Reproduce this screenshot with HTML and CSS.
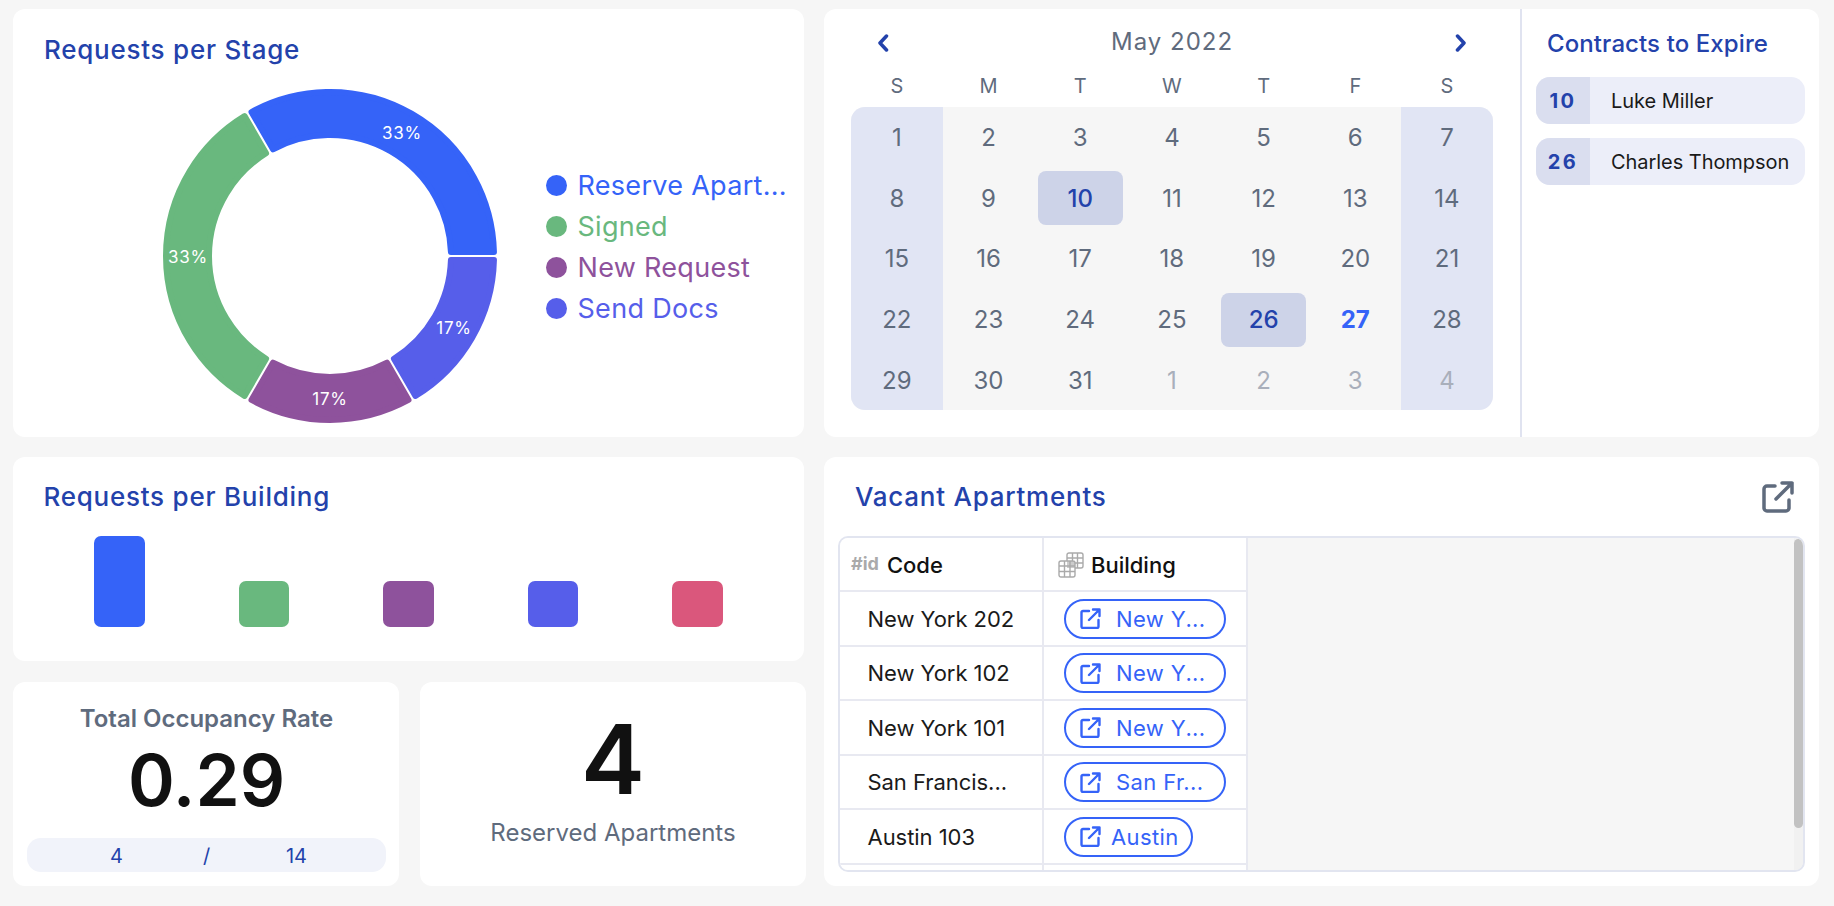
FILE: index.html
```html
<!DOCTYPE html>
<html lang="en">
<head>
<meta charset="utf-8">
<title>Dashboard</title>
<link rel="stylesheet" href="styles.css">
</head>
<body>
<main class="dash">
  <section class="card stage">
    <h2 class="title">Requests per Stage</h2>
    <div class="stage-body">
      <div class="donut">
        <svg class="donut-svg" viewBox="-168 -168 336 336" width="336" height="336">
          <path class="seg blue" d="M163.95 -4A164 164 0 0 0 -78.51 -143.99L-57.01 -106.72A121 121 0 0 1 120.93 -4Z"/>
          <path class="seg green" d="M-85.46 -139.97A164 164 0 0 0 -85.46 139.97L-63.94 102.73A121 121 0 0 1 -63.94 -102.73Z"/>
          <path class="seg purple" d="M-78.51 143.99A164 164 0 0 0 78.51 143.99L57.01 106.72A121 121 0 0 1 -57.01 106.72Z"/>
          <path class="seg peri" d="M85.46 139.97A164 164 0 0 0 163.95 4L120.93 4A121 121 0 0 1 63.94 102.73Z"/>
          <text class="pct" x="72" y="-123">33%</text>
          <text class="pct" x="-142" y="0.5">33%</text>
          <text class="pct" x="124" y="71.5">17%</text>
          <text class="pct" x="0" y="142.5">17%</text>
        </svg>
      </div>
      <ul class="legend">
        <li class="legend-item c-blue"><span class="dot"></span>Reserve Apart...</li>
        <li class="legend-item c-green"><span class="dot"></span>Signed</li>
        <li class="legend-item c-purple"><span class="dot"></span>New Request</li>
        <li class="legend-item c-peri"><span class="dot"></span>Send Docs</li>
      </ul>
    </div>
  </section>

  <section class="card cal-card">
    <div class="calendar">
      <div class="cal-head">
        <svg class="chev" viewBox="0 0 12 18" width="12" height="18"><path d="M9.500 2 3 9l6.500 7"/></svg>
        <span class="cal-month">May 2022</span>
        <svg class="chev" viewBox="0 0 12 18" width="12" height="18"><path d="M2.500 2 9 9l-6.500 7"/></svg>
      </div>
      <div class="cal-week">
        <span>S</span><span>M</span><span>T</span><span>W</span><span>T</span><span>F</span><span>S</span>
      </div>
      <div class="cal-grid">
        <span class="day we">1</span><span class="day">2</span><span class="day">3</span><span class="day">4</span><span class="day">5</span><span class="day">6</span><span class="day we">7</span>
        <span class="day we">8</span><span class="day">9</span><span class="day"><b class="mark">10</b></span><span class="day">11</span><span class="day">12</span><span class="day">13</span><span class="day we">14</span>
        <span class="day we">15</span><span class="day">16</span><span class="day">17</span><span class="day">18</span><span class="day">19</span><span class="day">20</span><span class="day we">21</span>
        <span class="day we">22</span><span class="day">23</span><span class="day">24</span><span class="day">25</span><span class="day"><b class="mark">26</b></span><span class="day today">27</span><span class="day we">28</span>
        <span class="day we">29</span><span class="day">30</span><span class="day">31</span><span class="day off">1</span><span class="day off">2</span><span class="day off">3</span><span class="day we off">4</span>
      </div>
    </div>
    <aside class="contracts">
      <h2 class="title contracts-title">Contracts to Expire</h2>
      <div class="contract"><span class="contract-day">10</span><span class="contract-name">Luke Miller</span></div>
      <div class="contract"><span class="contract-day">26</span><span class="contract-name">Charles Thompson</span></div>
    </aside>
  </section>

  <div class="left-low">
    <section class="card building">
      <h2 class="title">Requests per Building</h2>
      <div class="bars">
        <span class="bar tall blue-bg"></span>
        <span class="bar green-bg"></span>
        <span class="bar purple-bg"></span>
        <span class="bar peri-bg"></span>
        <span class="bar pink-bg"></span>
      </div>
    </section>
    <div class="kpis">
      <section class="card kpi occupancy">
        <h3 class="kpi-title">Total Occupancy Rate</h3>
        <div class="kpi-value">0.29</div>
        <div class="ratio"><span>4</span><span>/</span><span>14</span></div>
      </section>
      <section class="card kpi reserved">
        <div class="big-value">4</div>
        <div class="big-label">Reserved Apartments</div>
      </section>
    </div>
  </div>

  <section class="card vacant">
    <div class="vacant-head">
      <h2 class="title">Vacant Apartments</h2>
      <svg class="open-icon" viewBox="0 0 32 32" width="32" height="32"><path d="M13 5H5a3 3 0 0 0-3 3v19a3 3 0 0 0 3 3h19a3 3 0 0 0 3-3v-8M20 2h10v10M30 2 14 18"/></svg>
    </div>
    <div class="table-wrap">
      <div class="table">
        <div class="row head">
          <div class="cell"><span class="id-tag">#id</span><span class="head-label">Code</span></div>
          <div class="cell">
            <svg class="grid-icon" viewBox="0 0 26 26" width="26" height="26"><rect class="grid-fill" x="9" y="9" width="8" height="7"/><path d="M11 1h12a2 2 0 0 1 2 2v11a2 2 0 0 1-2 2h-6M9 9V3a2 2 0 0 1 2-2M14.500 1v8M19.500 1v15M9 6h16M17 11h8M3 9h12a2 2 0 0 1 2 2v12a2 2 0 0 1-2 2H3a2 2 0 0 1-2-2V11a2 2 0 0 1 2-2ZM6.500 9v16M12 9v16M1 14h16M1 19.500h16"/></svg>
            <span class="head-label">Building</span>
          </div>
        </div>
        <div class="row"><div class="cell code">New York 202</div><div class="cell"><a class="pill"><svg class="pill-icon" viewBox="0 0 21 21" width="21" height="21"><path d="M9 3H3a1.500 1.500 0 0 0-1.500 1.500v14A1.500 1.500 0 0 0 3 20h14a1.500 1.500 0 0 0 1.500-1.500V12M13 1.500h6.500V8M19.500 1.500 9 12"/></svg><span class="pill-text">New Y...</span></a></div></div>
        <div class="row"><div class="cell code">New York 102</div><div class="cell"><a class="pill"><svg class="pill-icon" viewBox="0 0 21 21" width="21" height="21"><path d="M9 3H3a1.500 1.500 0 0 0-1.500 1.500v14A1.500 1.500 0 0 0 3 20h14a1.500 1.500 0 0 0 1.500-1.500V12M13 1.500h6.500V8M19.500 1.500 9 12"/></svg><span class="pill-text">New Y...</span></a></div></div>
        <div class="row"><div class="cell code">New York 101</div><div class="cell"><a class="pill"><svg class="pill-icon" viewBox="0 0 21 21" width="21" height="21"><path d="M9 3H3a1.500 1.500 0 0 0-1.500 1.500v14A1.500 1.500 0 0 0 3 20h14a1.500 1.500 0 0 0 1.500-1.500V12M13 1.500h6.500V8M19.500 1.500 9 12"/></svg><span class="pill-text">New Y...</span></a></div></div>
        <div class="row"><div class="cell code">San Francis...</div><div class="cell"><a class="pill"><svg class="pill-icon" viewBox="0 0 21 21" width="21" height="21"><path d="M9 3H3a1.500 1.500 0 0 0-1.500 1.500v14A1.500 1.500 0 0 0 3 20h14a1.500 1.500 0 0 0 1.500-1.500V12M13 1.500h6.500V8M19.500 1.500 9 12"/></svg><span class="pill-text">San Fr...</span></a></div></div>
        <div class="row"><div class="cell code">Austin 103</div><div class="cell"><a class="pill short"><svg class="pill-icon" viewBox="0 0 21 21" width="21" height="21"><path d="M9 3H3a1.500 1.500 0 0 0-1.500 1.500v14A1.500 1.500 0 0 0 3 20h14a1.500 1.500 0 0 0 1.500-1.500V12M13 1.500h6.500V8M19.500 1.500 9 12"/></svg><span class="pill-text">Austin</span></a></div></div>
        <div class="row"><div class="cell"></div><div class="cell"></div></div>
      </div>
      <div class="scroll-track"><div class="scroll-thumb"></div></div>
    </div>
  </section>
</main>
</body>
</html>
```
FILE: styles.css
```css
* { box-sizing: border-box; }
html, body { margin: 0; height: 100%; }
body {
  background: #f6f6f6;
  font-family: Inter, "Liberation Sans", sans-serif;
  color: #111;
  overflow: hidden;
}
h2, h3, ul { margin: 0; padding: 0; }
.dash {
  display: grid;
  grid-template-columns: 793px 995px;
  grid-template-rows: 428px 429px;
  column-gap: 18px;
  row-gap: 20px;
  padding: 9px 0 0 13px;
}
.card { background: #fff; border-radius: 12px; }
.title {
  font-size: 26px;
  line-height: 30px;
  font-weight: 500;
  letter-spacing: 0.75px;
  color: #2342ab;
}

/* donut */
.stage { margin-right: 2px; padding: 26px 0 0 31px; position: relative; }
.stage-body { display: flex; align-items: flex-start; margin-top: 22.5px; }
.donut { margin: 0 0 0 117.5px; width: 336px; height: 336px; }
.donut-svg { display: block; }
.seg { stroke-width: 6; stroke-linejoin: round; }
.blue { fill: #3563f8; stroke: #3563f8; }
.green { fill: #69b87e; stroke: #69b87e; }
.purple { fill: #8e529c; stroke: #8e529c; }
.peri { fill: #565eea; stroke: #565eea; }
.pct {
  fill: #fff;
  font-size: 17px;
  letter-spacing: 0.8px;
  text-anchor: middle;
  dominant-baseline: central;
}
.legend { list-style: none; margin: 77px 0 0 48px; }
.legend-item {
  display: flex;
  align-items: center;
  gap: 11px;
  height: 41px;
  font-size: 27px;
  letter-spacing: 0.3px;
  white-space: nowrap;
}
.dot { width: 21px; height: 21px; border-radius: 50%; background: currentColor; }
.c-blue { color: #3563f8; }
.c-green { color: #69b87e; }
.c-purple { color: #8e529c; }
.c-peri { color: #565eea; }

/* calendar */
.cal-card { display: flex; }
.calendar { width: 698px; padding: 0 0 0 27px; border-right: 2px solid #e0e3f0; }
.cal-head {
  display: flex;
  align-items: center;
  justify-content: space-between;
  height: 56px;
  padding: 12px 53px 0 26px;
}
.cal-month { font-size: 24px; font-weight: 400; letter-spacing: 1px; color: #5f6b7d; margin-top: -3px; }
.chev { fill: none; stroke: #2342ab; stroke-width: 3.500; stroke-linecap: round; stroke-linejoin: round; }
.cal-week {
  display: grid;
  grid-template-columns: repeat(7, 91.7px);
  height: 42px;
  align-items: center;
  text-align: center;
  font-size: 20px;
  color: #5f6b7d;
}
.cal-grid {
  display: grid;
  grid-template-columns: repeat(7, 91.7px);
  grid-auto-rows: 60.6px;
  width: 642px;
  background: #f6f6f6;
  border-radius: 14px;
  overflow: hidden;
}
.day {
  display: flex;
  align-items: center;
  justify-content: center;
  padding-top: 1px;
  font-size: 24px;
  color: #5f6b7d;
}
.we { background: #e1e5f4; }
.off { color: #a9afbb; }
.today { color: #3563f8; font-weight: 700; }
.mark {
  display: flex;
  align-items: center;
  justify-content: center;
  width: 85px;
  height: 54px;
  border-radius: 8px;
  background: #cdd3e8;
  color: #2342ab;
  font-weight: 450;
}
.contracts { flex: 1; padding: 20px 14px 0 14px; }
.contracts-title { padding-left: 11px; margin-bottom: 18px; font-size: 24px; letter-spacing: 0.1px; }
.contract {
  display: flex;
  height: 47px;
  margin-bottom: 14px;
  border-radius: 14px;
  overflow: hidden;
  background: #eceef9;
  align-items: stretch;
  font-size: 20px;
}
.contract-day {
  width: 54px;
  display: flex;
  align-items: center;
  justify-content: center;
  background: #dadeef;
  color: #2342ab;
  font-weight: 700;
  letter-spacing: 2.5px;
}
.contract-name { display: flex; align-items: center; padding: 1px 0 0 21px; color: #1a1a1a; letter-spacing: -0.05px; }

/* building bars */
.left-low { display: flex; flex-direction: column; gap: 21px; }
.building { height: 204px; margin-right: 2px; padding: 25px 0 0 30.5px; }
.bars {
  display: flex;
  align-items: flex-end;
  gap: 93.9px;
  height: 91px;
  margin: 24px 0 0 50.5px;
}
.bar { width: 50.7px; height: 46px; border-radius: 7px; }
.bar.tall { height: 91px; }
.blue-bg { background: #3563f8; }
.green-bg { background: #69b87e; }
.purple-bg { background: #8e529c; }
.peri-bg { background: #565eea; }
.pink-bg { background: #da577c; }

/* kpi */
.kpis { display: grid; grid-template-columns: 386px 386px; column-gap: 21px; height: 204px; }
.kpi { display: flex; flex-direction: column; align-items: center; }
.occupancy { padding: 22px 13px 0 14px; }
.kpi-title { font-size: 24px; line-height: 30px; font-weight: 600; color: #5f6b7d; }
.kpi-value { font-size: 71px; line-height: 76px; font-weight: 600; color: #111; margin-top: 8px; }
.ratio {
  width: 100%;
  height: 34px;
  margin-top: 20px;
  padding-top: 1px;
  border-radius: 14px;
  background: #f1f3fa;
  display: grid;
  grid-template-columns: repeat(3, 90px);
  justify-content: center;
  align-items: center;
  text-align: center;
  font-size: 20px;
  color: #2342ab;
}
.reserved { padding-top: 19px; }
.big-value { font-size: 96px; line-height: 116px; font-weight: 600; color: #111; }
.big-label { font-size: 24px; line-height: 30px; color: #5f6b7d; margin-top: 1px; }

/* table */
.vacant { padding: 0 14px 14px 14px; }
.vacant-head {
  display: flex;
  align-items: center;
  justify-content: space-between;
  height: 79px;
  padding: 0 11px 0 17px;
}
.open-icon { fill: none; stroke: #5f6b7d; stroke-width: 3.500; stroke-linecap: round; stroke-linejoin: round; }
.table-wrap {
  position: relative;
  height: 336px;
  border: 2px solid #e2e5f0;
  border-radius: 10px;
  background: #f6f6f6;
  overflow: hidden;
}
.table { width: 408px; }
.row { display: grid; grid-template-columns: 204px 204px; height: 54.5px; border-bottom: 2px solid #e8e9f1; background: #fff; }
.row.head { height: 54px; }
.cell {
  display: flex;
  align-items: center;
  padding-top: 1px;
  border-right: 2px solid #e8e9f1;
  font-size: 22px;
  color: #1a1a1a;
  white-space: nowrap;
  min-width: 0;
}
.cell.code { padding-left: 27.5px; letter-spacing: -0.05px; }
.head .cell { padding-left: 11px; }
.id-tag { font-size: 18px; font-weight: 700; color: #aaa; margin-right: 8px; margin-top: -3px; }
.head-label { font-size: 22px; font-weight: 500; color: #111; }
.grid-icon { fill: none; stroke: #aaa; stroke-width: 1.400; margin: 0 7px 0 3px; }
.grid-fill { fill: #ccc; stroke: none; }
.pill {
  display: flex;
  align-items: center;
  gap: 15px;
  width: 162px;
  height: 40px;
  margin-left: 20px;
  padding-left: 14px;
  border: 2px solid #3563f8;
  border-radius: 20px;
  color: #3563f8;
}
.pill.short { width: 129px; gap: 10px; }
.pill-icon { fill: none; stroke: #3563f8; stroke-width: 2.400; stroke-linecap: round; stroke-linejoin: round; flex: none; }
.pill-text { font-size: 22px; letter-spacing: 0.4px; }
.scroll-track { position: absolute; top: 0; right: 0; bottom: 0; width: 9px; padding-top: 1px; background: #f1f1f1; }
.scroll-thumb { width: 9px; height: 289px; border-radius: 5px; background: #c2c2c2; }
```
